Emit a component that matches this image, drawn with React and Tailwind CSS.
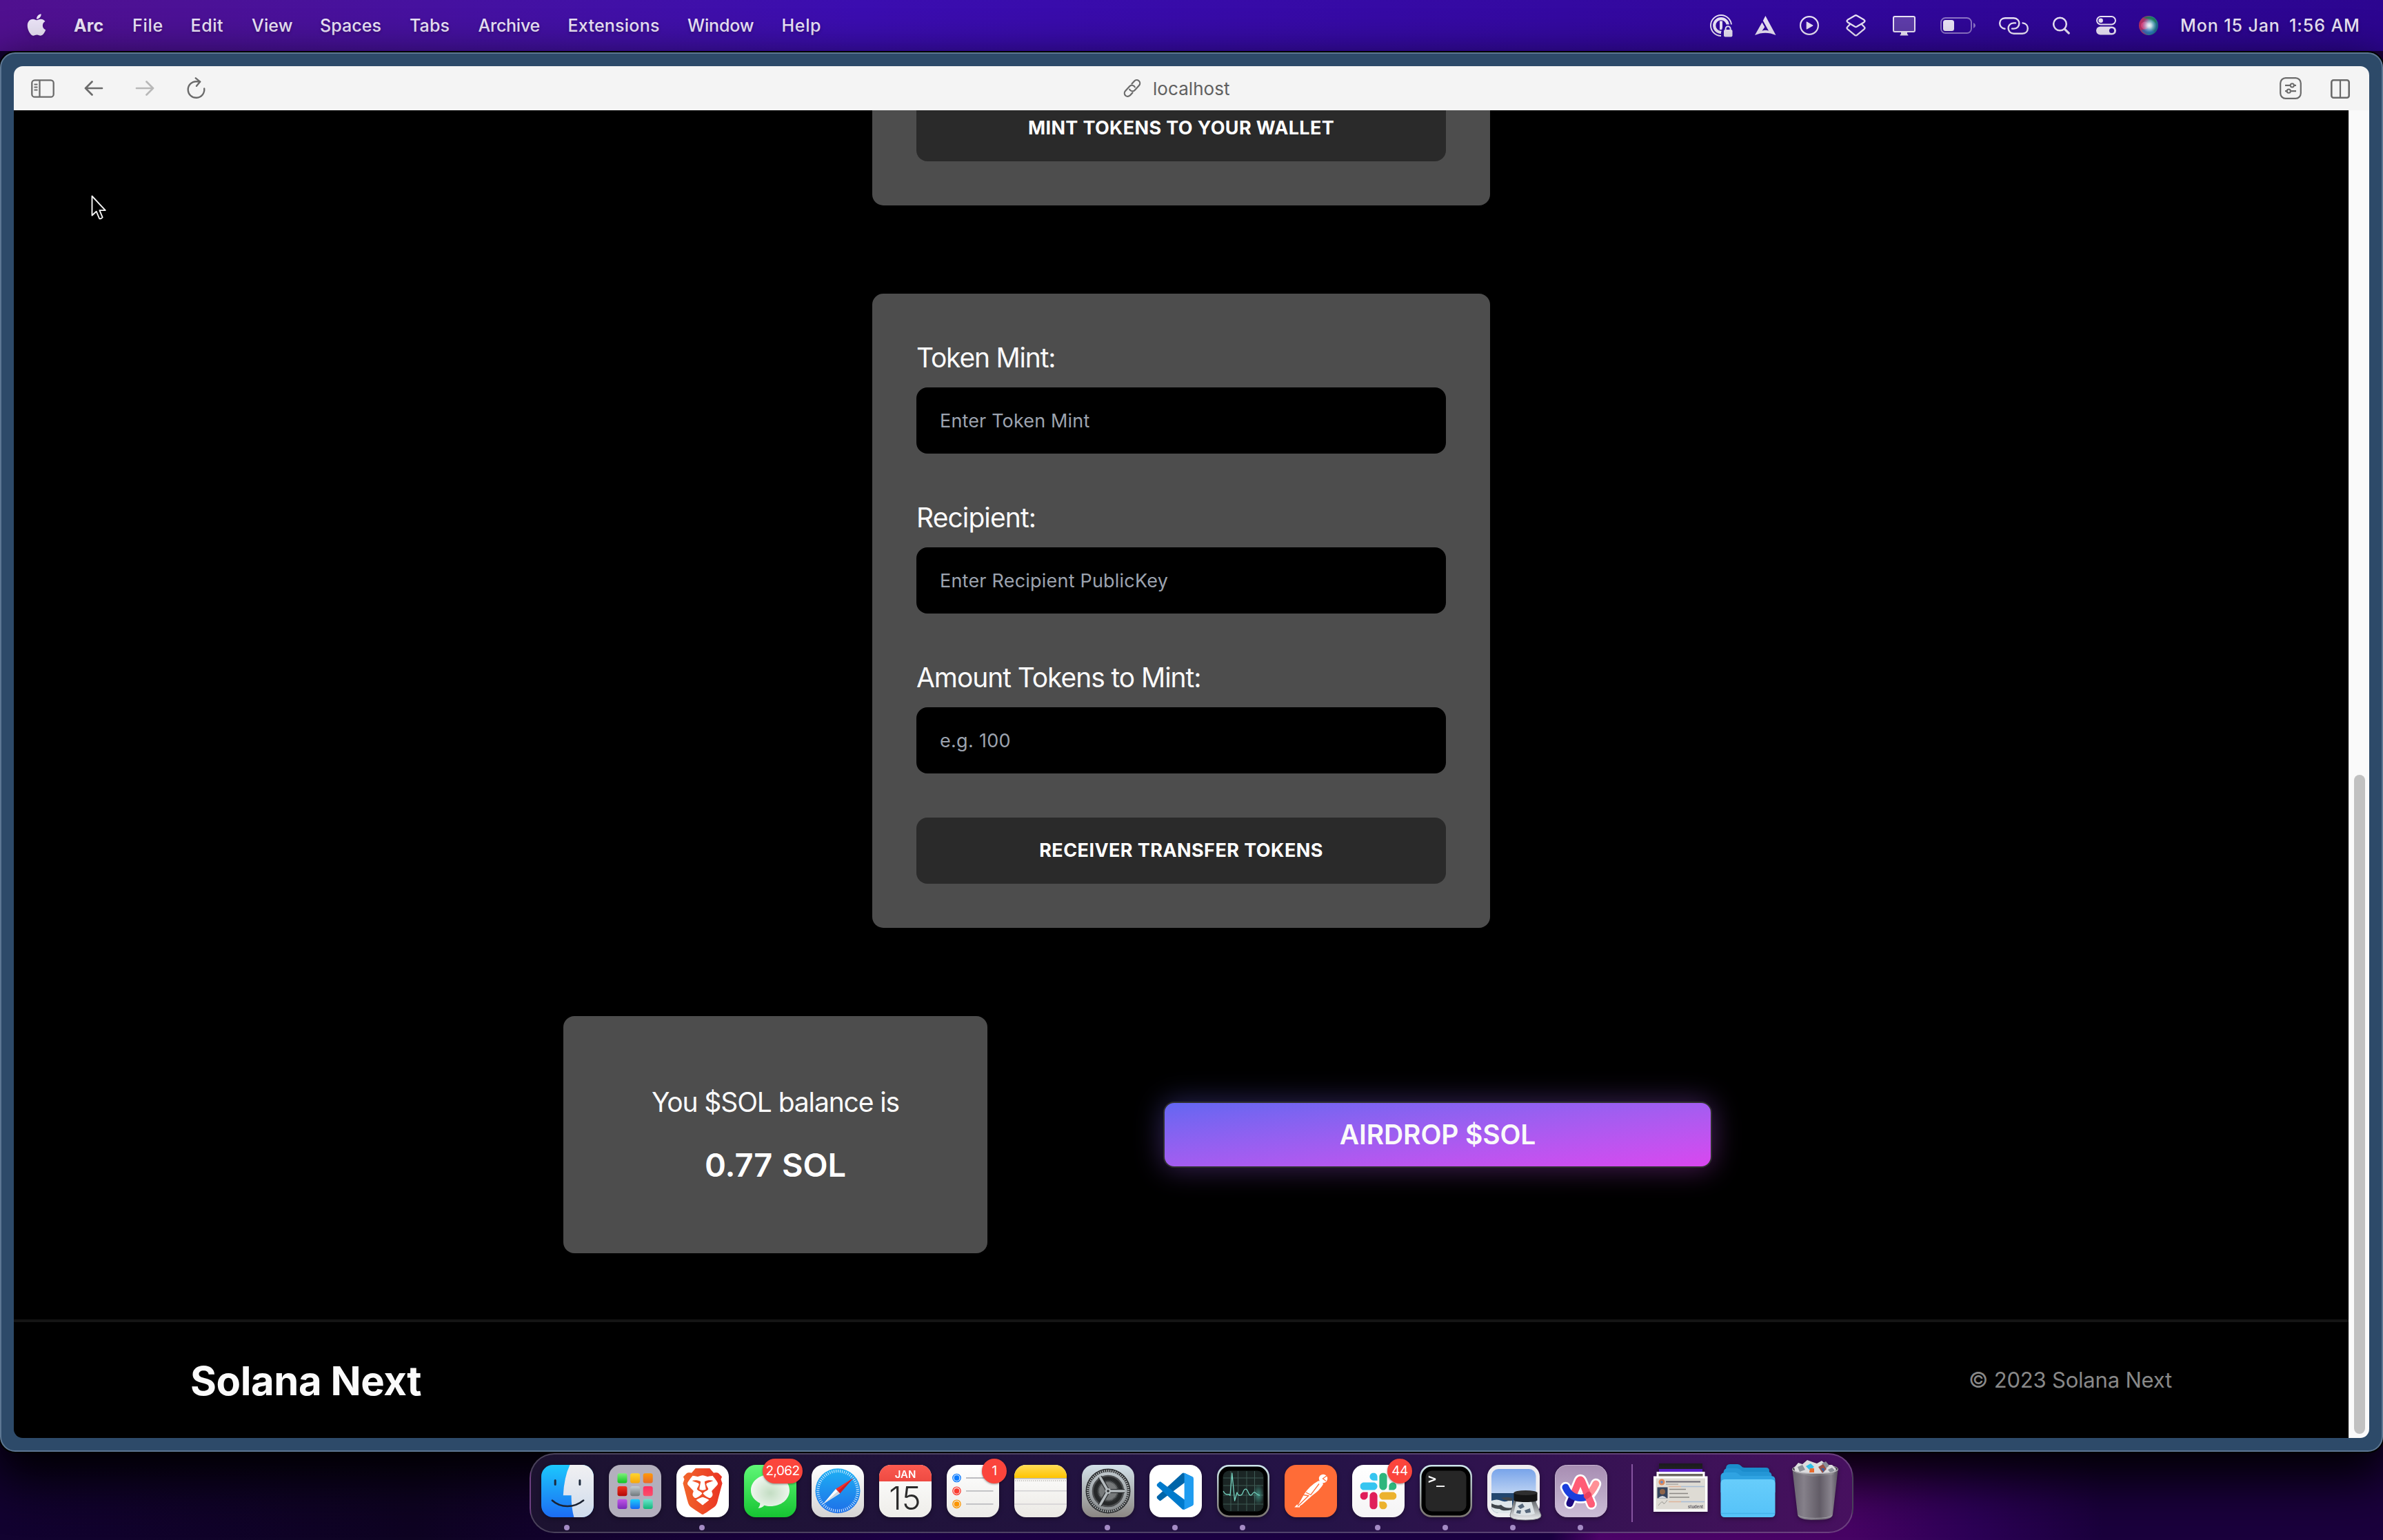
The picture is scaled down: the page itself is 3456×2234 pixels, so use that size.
import { FaApple } from "react-icons/fa";
import { SiBrave } from "react-icons/si";

const INK = "#ebe4f7";

/* ---------------------------------------------------------------- menu bar */

const MENU = [
  { label: "Arc", cls: "w-[85px] font-bold tracking-[0.17px]" },
  { label: "File", cls: "w-[84.6px] tracking-[0.75px]" },
  { label: "Edit", cls: "w-[88.4px] tracking-[0.53px]" },
  { label: "View", cls: "w-[99px] tracking-[0.18px]" },
  { label: "Spaces", cls: "w-[130px] tracking-[0.08px]" },
  { label: "Tabs", cls: "w-[99.5px] tracking-[0.13px]" },
  { label: "Archive", cls: "w-[130px] tracking-[-0.25px]" },
  { label: "Extensions", cls: "w-[173.500px] tracking-[0.24px]" },
  { label: "Window", cls: "w-[136.500px] tracking-[-0.14px]" },
  { label: "Help", cls: "w-[80px] tracking-[0.67px]" },
];

function StatusIcons() {
  return (
    <>
      <svg width="33" height="33" viewBox="0 0 33 33" fill="none">
        <circle cx="16" cy="16" r="15" stroke={INK} strokeWidth="1.9" />
        <circle cx="16" cy="16" r="9.8" stroke={INK} strokeWidth="4.2" />
        <rect x="14" y="9.5" width="4" height="12.5" fill={INK} />
        <path d="M16 33V26l2.5-8.5L22 14.5h11V33z" fill="#2f08a0" />
        <rect x="20" y="22" width="12.5" height="10.5" rx="2" fill={INK} />
        <path d="M22.6 23v-2.200a3.500 3.500 0 0 1 7 0V23" stroke={INK} strokeWidth="2" />
      </svg>
      <svg className="ml-[32px]" width="31" height="28" viewBox="0 0 31 28" fill={INK}>
        <path d="M0 28 10.500 9.500l3.800 6.800-3.800 5.500c3.500-1.300 6.500-1.300 9.500 0L11.800 7l3.600-7L30.500 28C20.500 23.500 10 23.500 0 28z" />
      </svg>
      <svg className="ml-[34px]" width="28" height="28" viewBox="0 0 28 28" fill="none">
        <circle cx="14" cy="14" r="12.900" stroke={INK} strokeWidth="2.200" />
        <path d="M10.200 8.800v10.400l9-5.200z" fill={INK} stroke={INK} strokeLinejoin="round" />
      </svg>
      <svg className="ml-[39px]" width="29" height="32" viewBox="0 0 29 32" fill="none" stroke={INK} strokeWidth="2.300" strokeLinejoin="round" strokeLinecap="round">
        <path d="M12.900 1.700q1.600-.900 3.200 0l10.300 6.100q2.200 1.700 0 3.400l-10.300 6.400q-1.600 .900-3.200 0L2.600 11.200q-2.200-1.700 0-3.400z" />
        <path d="M6.300 14 2.600 17.800q-2.200 1.700 0 3.600l10.300 8.500q1.600 .900 3.200 0l10.300-8.500q2.200-1.900 0-3.600L22.700 14" />
      </svg>
      <svg className="ml-[39px]" width="33" height="29" viewBox="0 0 33 29" fill="none">
        <rect x="1" y="1" width="31" height="22" rx="2" fill="#5f3dab" stroke={INK} strokeWidth="2" />
        <path d="M12 24h9v2.500q1.500 0 1.500 2h-12q0-2 1.500-2z" fill={INK} />
      </svg>
      <svg className="ml-[36px]" width="51" height="24" viewBox="0 0 51 24" fill="none">
        <rect x="1" y="1" width="44" height="22" rx="6.500" stroke={INK} strokeOpacity=".5" strokeWidth="1.900" />
        <rect x="4" y="4" width="16" height="16" rx="3.500" fill={INK} />
        <path d="M48 8q3 1.500 3 4t-3 4z" fill={INK} fillOpacity=".5" />
      </svg>
      <svg className="ml-[34px]" width="43" height="25" viewBox="0 0 43 25" fill="none" stroke={INK} strokeWidth="2.400" strokeLinecap="round">
        <path d="M8.500 16.800C-1.400 15.500-1.200 1.300 9 1.300h12.500c10.500 0 10.500 15.300 0 15.300H19" />
        <path d="M34.500 8.400c9.900 1.300 9.700 15.300-.500 15.300H21.500c-10.500 0-10.500-15.300 0-15.300H24" />
      </svg>
      <svg className="ml-[35px]" width="25" height="26" viewBox="0 0 25 26" fill="none" stroke={INK} strokeLinecap="round">
        <circle cx="10.500" cy="11" r="9.300" strokeWidth="2.500" />
        <path d="m17.500 18.300 5.800 5.800" strokeWidth="3.200" />
      </svg>
      <svg className="ml-[38px]" width="29" height="28" viewBox="0 0 29 28" fill="none">
        <rect x="1" y="1" width="27" height="11.500" rx="5.750" stroke={INK} strokeWidth="2" />
        <circle cx="6.700" cy="6.800" r="3.300" fill={INK} />
        <rect x="0" y="15.500" width="29" height="12" rx="6" fill={INK} />
        <circle cx="22.500" cy="21.500" r="3.600" fill="#2e0799" />
      </svg>
      <svg className="ml-[33px]" width="28" height="28" viewBox="0 0 28 28">
        <defs>
          <linearGradient id="siriBase" x1="0" y1=".4" x2="1" y2=".6">
            <stop offset="0" stopColor="#c02a5c" />
            <stop offset=".35" stopColor="#9a3f78" />
            <stop offset=".6" stopColor="#2d8f8a" />
            <stop offset="1" stopColor="#1b5f8c" />
          </linearGradient>
          <radialGradient id="siriGlow" cx=".54" cy=".5" r=".38">
            <stop offset="0" stopColor="#fff" />
            <stop offset=".3" stopColor="#e6f4ff" stopOpacity=".85" />
            <stop offset="1" stopColor="#8fd0ff" stopOpacity="0" />
          </radialGradient>
        </defs>
        <circle cx="14" cy="14" r="14" fill="url(#siriBase)" />
        <path d="M6 3q9-5 17 1 3 4 2 7-8-7-19-8z" fill="#1f7a57" fillOpacity=".85" />
        <path d="M3 21q8-2 12-6 2 6 8 8-10 9-20-2z" fill="#2a6fc0" fillOpacity=".75" />
        <circle cx="8.500" cy="14" r="5.500" fill="#f0508a" fillOpacity=".7" />
        <circle cx="14" cy="14" r="14" fill="url(#siriGlow)" />
      </svg>
    </>
  );
}

function MenuBar() {
  return (
    <header className="flex h-[74px] items-center bg-linear-to-r from-[#50108f] via-[#3b0db0] via-36% to-[#2c0590] text-[25px] font-medium text-[#ebe4f7] [text-shadow:0_2px_4px_rgba(0,0,0,0.25)]">
      <FaApple className="-mt-[3px] ml-[36px] h-[36px] w-[34px] drop-shadow-md" />
      <nav className="ml-[37px] flex leading-[74px] whitespace-nowrap">
        {MENU.map((m) => (
          <span key={m.label} className={m.cls}>
            {m.label}
          </span>
        ))}
      </nav>
      <div className="ml-auto flex w-[976px] items-center leading-[74px] whitespace-nowrap">
        <StatusIcons />
        <span className="ml-[32px] w-[158px] tracking-[0.900px]">Mon 15 Jan</span>
        <span className="tracking-[0.920px]">1:56 AM</span>
      </div>
    </header>
  );
}

/* ----------------------------------------------------------- browser chrome */

function Toolbar() {
  return (
    <div className="flex h-[64px] shrink-0 items-center bg-[#f4f4f4] text-[#6b6b6b]">
      <div className="flex w-[1608px] items-center pl-[25px]">
        <svg width="34" height="27" viewBox="0 0 34 27" fill="none" stroke="currentColor">
          <rect x="1.300" y="1.300" width="31.400" height="24.400" rx="4" strokeWidth="2.300" />
          <path d="M12.500 2v23" strokeWidth="2.300" />
          <path d="M4.500 7.500h5M4.500 11.500h5M4.500 15.500h5" strokeWidth="1.800" />
        </svg>
        <svg className="ml-[43px]" width="28" height="22" viewBox="0 0 28 22" fill="none" stroke="currentColor" strokeWidth="2.700" strokeLinecap="round" strokeLinejoin="round">
          <path d="M26 11H2M11.500 1.500 2 11l9.500 9.500" />
        </svg>
        <svg className="ml-[46px] text-[#b8b8b8]" width="28" height="22" viewBox="0 0 28 22" fill="none" stroke="currentColor" strokeWidth="2.700" strokeLinecap="round" strokeLinejoin="round">
          <path d="M2 11h24M16.500 1.500 26 11l-9.500 9.500" />
        </svg>
        <svg className="ml-[47px]" width="28" height="32" viewBox="0 0 28 32" fill="none" stroke="currentColor" strokeWidth="2.400" strokeLinecap="round" strokeLinejoin="round">
          <path d="M25.200 16.500a11.800 11.800 0 1 1-11.500-10.300c2 0 3.600.100 5.300.300" />
          <path d="m12.800 1.300 6.400 5.300-5.200 6.200" />
        </svg>
      </div>
      <svg width="28" height="28" viewBox="0 0 28 28" fill="none" stroke="currentColor" strokeWidth="2.200" strokeLinecap="round">
        <g transform="rotate(-48 14 14)">
          <path d="M9.500 18.700H4.300a4.700 4.700 0 0 1 0-9.400h9.200a4.700 4.700 0 0 1 4.300 6.500" />
          <path d="M18.500 9.300h5.200a4.700 4.700 0 0 1 0 9.400h-9.200a4.700 4.700 0 0 1-4.300-6.500" />
        </g>
      </svg>
      <span className="ml-[16px] pt-px text-[26px] leading-[64px] tracking-[0.050px] text-[#606060]">localhost</span>
      <div className="ml-auto flex items-center pr-[28px]">
        <svg width="32" height="32" viewBox="0 0 32 32" fill="none" stroke="currentColor">
          <rect x="1.200" y="1.200" width="29.600" height="29.600" rx="7.500" strokeWidth="2.200" />
          <path d="M8 11.800h7.500M21 11.800h3M8 20.200h2.500M16.500 20.200H24" strokeWidth="2.300" />
          <circle cx="18.300" cy="11.800" r="2.600" strokeWidth="2" />
          <circle cx="13.300" cy="20.200" r="2.600" strokeWidth="2" />
        </svg>
        <svg className="mt-[2px] ml-[42px]" width="28" height="28" viewBox="0 0 28 28" fill="none" stroke="currentColor" strokeWidth="2.600">
          <rect x="1.300" y="1.300" width="25.400" height="25.400" rx="3" />
          <path d="M14 1.500v25" strokeWidth="2.200" />
        </svg>
      </div>
    </div>
  );
}

/* -------------------------------------------------------------- page itself */

function Field({ label, labelClass, placeholder, inputClass }) {
  return (
    <label className="mb-[64px] block">
      <span className={"mb-[16px] block h-[56px] pt-px text-[39px] leading-[56px] text-[#fafafa] " + labelClass}>{label}</span>
      <span className={"flex h-[96px] items-center rounded-[16px] border-2 border-black bg-black px-[32px] pt-[2px] text-[27px] text-[#9ca3af] " + inputClass}>
        {placeholder}
      </span>
    </label>
  );
}

function ActionButton({ className, children }) {
  return (
    <button className={"block h-[96px] w-full rounded-[16px] bg-[#2a2a2a] text-[27px] font-bold text-white " + className}>
      {children}
    </button>
  );
}

function Page() {
  return (
    <main className="flex h-full w-[3386px] flex-col items-center overflow-hidden bg-black">
      <section className="-mt-[62px] h-[200px] w-[896px] shrink-0 rounded-[16px] bg-[#4d4d4d] px-[64px] pt-[40px]">
        <ActionButton className="tracking-[0.350px]">MINT TOKENS TO YOUR WALLET</ActionButton>
      </section>

      <section className="mt-[128px] h-[920px] w-[896px] shrink-0 rounded-[16px] bg-[#4d4d4d] p-[64px]">
        <Field label="Token Mint:" labelClass="tracking-[-1.200px]" placeholder="Enter Token Mint" inputClass="tracking-[0.150px]" />
        <Field label="Recipient:" labelClass="tracking-[-0.900px]" placeholder="Enter Recipient PublicKey" inputClass="tracking-[0.210px]" />
        <Field label="Amount Tokens to Mint:" labelClass="tracking-[-1.080px]" placeholder="e.g. 100" inputClass="tracking-[0.300px]" />
        <ActionButton className="tracking-[0.430px]">RECEIVER TRANSFER TOKENS</ActionButton>
      </section>

      <div className="mt-[128px] flex w-full shrink-0 items-center gap-[255px] pl-[797px]">
        <section className="flex h-[344px] w-[615px] flex-col items-center gap-[32px] rounded-[16px] bg-[#4d4d4d] py-[96px] whitespace-nowrap">
          <p className="pt-px text-[39px] leading-[55px] tracking-[-1.120px] text-[#fafafa]">You $SOL balance is</p>
          <p className="text-[47px] leading-[64px] font-semibold tracking-[-0.100px] text-white">0.77&nbsp;<span className="ml-[2px]">SOL</span></p>
        </section>
        <div className="relative h-[96px] w-[796px]">
          <div className="absolute -inset-[2px] rounded-[20px] bg-linear-to-br from-[#6366f1] to-[#d946ef] opacity-35 blur-[20px]" />
          <button className="relative block h-full w-full rounded-[16px] border-2 border-[#2e2e2e] bg-linear-to-br from-[#6366f1] to-[#d946ef] pt-px text-[39px] font-semibold tracking-[-0.130px] text-[#fafafa]">
            AIRDROP $SOL
          </button>
        </div>
      </div>

      <footer className="mt-[96px] flex h-[172px] w-full shrink-0 items-center justify-between border-t-4 border-[#141414] pr-[256px] pl-[256px]">
        <h2 className="pt-[2px] text-[58px] font-bold tracking-[-0.430px] text-[#fafafa]">Solana Next</h2>
        <p className="pt-px text-[31px] tracking-[-0.200px] text-[#888888]">© 2023 Solana Next</p>
      </footer>
    </main>
  );
}

function BrowserWindow() {
  return (
    <div className="relative h-[2030px] rounded-[22px] border-2 border-[#5d7793] bg-[#2d4a69] p-[18px] shadow-[0_0_0_2px_#000000,0_30px_70px_10px_rgba(0,0,0,0.950)]">
      <div className="flex h-full flex-col overflow-hidden rounded-[13px]">
        <Toolbar />
        <div className="flex min-h-0 flex-1">
          <Page />
          <div className="flex flex-1 flex-col items-center justify-end border-l border-[#e6e6e6] bg-[#fafafa] pb-[6px]">
            <div className="h-[956px] w-[16px] rounded-full bg-[#c1c1c1]" />
          </div>
        </div>
      </div>
      <svg className="absolute top-[204px] left-[129px]" width="28" height="40" viewBox="0 0 28 40" fill="#000" stroke="#f4f4f4" strokeWidth="1.900" strokeLinejoin="round">
        <path d="M2.500 2.500v28l6.200-5.800 4.400 10.300q2.600 1 4.600-1.700l-4.300-10.200h8.400z" />
      </svg>
    </div>
  );
}

/* --------------------------------------------------------------------- dock */

function Tile({ children }) {
  return (
    <svg className="block overflow-visible drop-shadow-[0_2px_3px_rgba(0,0,0,0.350)]" width="76" height="76" viewBox="0 0 76 76">
      {children}
    </svg>
  );
}

function Gradient({ id, from, to, horizontal }) {
  return (
    <linearGradient id={id} x1="0" y1="0" x2={horizontal ? "1" : "0"} y2={horizontal ? "0" : "1"}>
      <stop offset="0" stopColor={from} />
      <stop offset="1" stopColor={to} />
    </linearGradient>
  );
}

function Finder() {
  return (
    <Tile>
      <defs>
        <Gradient id="finBlue" from="#1cc8fd" to="#1c6cf2" />
        <Gradient id="finGrey" from="#f1f0f2" to="#cfdcec" />
        <clipPath id="finClip"><rect width="76" height="76" rx="17" /></clipPath>
      </defs>
      <g clipPath="url(#finClip)">
        <rect width="76" height="76" fill="url(#finBlue)" />
        <path d="M41.500 0Q33 18 31.800 44.300h11.800Q43.500 62 47.400 76H76V0z" fill="url(#finGrey)" />
      </g>
      <path d="M20.200 22.500v6M55.900 22.500v6" stroke="#1d2a3d" strokeWidth="3" strokeLinecap="round" />
      <path d="M15.800 51.500Q25 60 38 60t23.200-8.500" fill="none" stroke="#1a2231" strokeWidth="2.500" strokeLinecap="round" />
    </Tile>
  );
}

const PADS = [
  ["#7df07a", "#0fc423"], ["#ffd52e", "#f7a60a"], ["#ff9a0b", "#e8692a"],
  ["#f2331f", "#b3090a"], ["#c3cdd4", "#70787c"], ["#ff2d62", "#f9506a"],
  ["#c154e8", "#7a2bb8"], ["#1fd0fb", "#1668f2"], ["#6ee5cf", "#12b77a"],
];

function Launchpad() {
  return (
    <Tile>
      <defs>
        {PADS.map(([a, b], i) => (
          <Gradient key={i} id={"pad" + i} from={a} to={b} />
        ))}
      </defs>
      <rect width="76" height="76" rx="17" fill="#b3afbd" />
      {PADS.map((p, i) => (
        <rect key={i} x={12.500 + (i % 3) * 18.600} y={12.300 + Math.floor(i / 3) * 18.700} width="14" height="14.200" rx="3" fill={"url(#pad" + i + ")"} />
      ))}
    </Tile>
  );
}

function Brave() {
  return (
    <Tile>
      <defs><Gradient id="braveG" from="#f1652b" to="#ea3323" horizontal /></defs>
      <rect width="76" height="76" rx="17" fill="#fff" />
      <SiBrave x="4.500" y="5" size="67" style={{ fill: "url(#braveG)" }} />
    </Tile>
  );
}

function Messages() {
  return (
    <Tile>
      <defs>
        <Gradient id="msgBg" from="#5ff777" to="#16c432" />
        <radialGradient id="msgBubble" cx=".5" cy=".55" r=".55">
          <stop offset="0" stopColor="#c3ddc3" />
          <stop offset="1" stopColor="#f2f8f2" />
        </radialGradient>
      </defs>
      <rect width="76" height="76" rx="17" fill="url(#msgBg)" />
      <path d="M38 14c16 0 28 10 28 23S54 60 38 60c-3 0-6-.400-8.500-1.200-2.500 2.400-5.500 4-9 4 2-2 3-4.500 2.700-7.200C15 51.500 10 45 10 37c0-13 12-23 28-23z" fill="url(#msgBubble)" />
    </Tile>
  );
}

function Safari() {
  return (
    <Tile>
      <defs>
        <Gradient id="safBg" from="#ffffff" to="#d4d3d3" />
        <Gradient id="safDisc" from="#1eb0f4" to="#1e6fe8" />
      </defs>
      <rect width="76" height="76" rx="17" fill="url(#safBg)" />
      <circle cx="38" cy="37.800" r="32.500" fill="url(#safDisc)" />
      <circle cx="38" cy="37.800" r="28.800" fill="none" stroke="#e8f4ff" strokeOpacity=".85" strokeWidth="4.200" strokeDasharray="1.100 1.913" />
      <path d="M60.500 19 41 41.500 35 35z" fill="#f0302c" />
      <path d="M60.500 19 41 41.500 38 38.200z" fill="#c81f28" />
      <path d="M16.500 57 35 35l6 6.500z" fill="#fff" />
      <path d="M16.500 57 38 38.200l3 3.300z" fill="#cfd6de" />
    </Tile>
  );
}

function Calendar() {
  return (
    <Tile>
      <defs>
        <Gradient id="calBg" from="#ffffff" to="#eeede9" />
        <Gradient id="calTop" from="#fb5a50" to="#ee4a42" />
        <clipPath id="calClip"><rect width="76" height="76" rx="17" /></clipPath>
      </defs>
      <g clipPath="url(#calClip)">
        <rect width="76" height="76" fill="url(#calBg)" />
        <rect width="76" height="24" fill="url(#calTop)" />
      </g>
      <text x="38" y="18.500" textAnchor="middle" fill="#fff" fontFamily="Inter, sans-serif" fontSize="15" fontWeight="600">JAN</text>
      <text x="37.500" y="65" textAnchor="middle" fill="#2b2b2b" fontFamily="Inter, sans-serif" fontSize="47" fontWeight="300">15</text>
    </Tile>
  );
}

function Reminders() {
  return (
    <Tile>
      <defs><Gradient id="remBg" from="#ffffff" to="#ecebe8" /></defs>
      <rect width="76" height="76" rx="17" fill="url(#remBg)" />
      {[["#0a7bff", 19], ["#fb3b30", 37.800], ["#fb9500", 56.800]].map(([c, y]) => (
        <g key={c}>
          <circle cx="14.500" cy={y} r="5.700" fill="none" stroke={c} strokeWidth="1.300" />
          <circle cx="14.500" cy={y} r="3.900" fill={c} />
          <path d={"M28 " + y + "h39.500"} stroke="#bdbdc1" strokeWidth="1.800" />
        </g>
      ))}
    </Tile>
  );
}

function Notes() {
  return (
    <Tile>
      <defs>
        <Gradient id="noteBg" from="#ffffff" to="#ebe9e4" />
        <Gradient id="noteTop" from="#ffdc59" to="#ffc400" />
        <clipPath id="noteClip"><rect width="76" height="76" rx="17" /></clipPath>
      </defs>
      <g clipPath="url(#noteClip)">
        <rect width="76" height="76" fill="url(#noteBg)" />
        <rect width="76" height="19" fill="url(#noteTop)" />
        <path d="M0 19.800h76" stroke="#aaa79f" strokeWidth="1.300" />
        <path d="M1 23h75" stroke="#b9b7b2" strokeWidth="1.500" strokeDasharray="1.300 1.600" />
        <path d="M0 37.800h76M0 57h76" stroke="#d2d1d3" strokeWidth="1.600" />
      </g>
    </Tile>
  );
}

function Settings() {
  return (
    <Tile>
      <defs>
        <Gradient id="setBg" from="#d3e1e9" to="#8b8783" />
        <Gradient id="setMetal" from="#bcc4c8" to="#8d9193" />
      </defs>
      <rect width="76" height="76" rx="17" fill="url(#setBg)" />
      <circle cx="38" cy="38" r="32.500" fill="#2b2d2f" />
      <circle cx="38" cy="38" r="29.500" fill="none" stroke="#aeb3b5" strokeWidth="3" strokeDasharray="1.500 1.589" />
      <circle cx="38" cy="38" r="25.500" fill="#4d4f51" stroke="url(#setMetal)" strokeWidth="4.500" />
      <circle cx="38" cy="38" r="17" fill="none" stroke="#262829" strokeWidth="8" />
      <circle cx="38" cy="38" r="14.500" fill="#76797a" stroke="#3d4042" strokeWidth="3.500" strokeDasharray="1.200 1.077" />
      <path d="M38 38h24M38 38 26 17.200M38 38 26 58.800" stroke="#2b2d2f" strokeWidth="6" />
      <path d="M38 38h24M38 38 26 17.200M38 38 26 58.800" stroke="#b4babd" strokeWidth="3.600" />
      <circle cx="38" cy="38" r="4" fill="#b4babd" />
      <circle cx="38" cy="38" r="1.800" fill="#2b2d2f" />
    </Tile>
  );
}

function Code() {
  return (
    <Tile>
      <rect width="76" height="76" rx="17" fill="#fff" />
      <svg x="10.500" y="11.500" width="53.500" height="53.500" viewBox="0 0 100 100">
        <path fill="#0065A9" d="M96.461 10.796 75.857.876A6.230 6.230 0 0 0 68.750 2.083L1.299 63.583c-1.815 1.654-1.813 4.511.004 6.162l5.510 5.009a4.170 4.170 0 0 0 5.321.237l81.227-61.620C96.086 11.303 100 13.246 100 16.667v-.240c0-2.400-1.375-4.590-3.539-5.631z" />
        <path fill="#007ACC" d="m96.461 89.204-20.604 9.920a6.230 6.230 0 0 1-7.107-1.207l-67.451-61.500c-1.815-1.654-1.813-4.511.004-6.162l5.510-5.009a4.170 4.170 0 0 1 5.321-.237l81.227 61.620C96.086 88.697 100 86.754 100 83.333v.240c0 2.400-1.375 4.590-3.539 5.631z" />
        <path fill="#1F9CF0" d="M75.858 99.126a6.230 6.230 0 0 1-7.108-1.210C71.056 100.223 75 98.590 75 95.328V4.672C75 1.410 71.056-.223 68.750 2.083A6.230 6.230 0 0 1 75.858.874l20.600 9.907A6.250 6.250 0 0 1 100 16.413v67.174a6.250 6.250 0 0 1-3.541 5.633z" />
      </svg>
    </Tile>
  );
}

function DarkFrame({ id, fill }) {
  return (
    <>
      <defs><Gradient id={id} from="#cfe7ee" to="#79736f" /></defs>
      <rect width="76" height="76" rx="17" fill={"url(#" + id + ")"} />
      <rect x="2.500" y="2.500" width="71" height="71" rx="15" fill="#000" />
      <rect x="8.500" y="8.500" width="59" height="59" rx="9" fill={fill} />
    </>
  );
}

function Activity() {
  return (
    <Tile>
      <defs>
        <radialGradient id="actGlow" cx=".5" cy=".5" r=".5">
          <stop offset="0" stopColor="#4fae9c" stopOpacity=".7" />
          <stop offset="1" stopColor="#4fae9c" stopOpacity="0" />
        </radialGradient>
      </defs>
      <DarkFrame id="actFrame" fill="#1b2625" />
      <path d="M20 9v58M30.500 9v58M43 9v58M54.500 9v58M9 19h58M9 30h58M9 44h58M9 57h58" stroke="#3e5a55" strokeWidth="1" />
      <ellipse cx="60" cy="43" rx="8" ry="15" fill="url(#actGlow)" />
      <path d="M9.200 38q2 5 6 5 2.500-1 3.800 1.500L21.800 12l3.800 40L29 40q1.500 5 5 4.200c4 0 3.500-9 7.500-9s3.500 9 7.500 9c2 0 3-4.500 5-4.500s4 4.500 8 4.500" fill="none" stroke="#74d3c0" strokeWidth="1.300" strokeLinejoin="round" />
    </Tile>
  );
}

function Postman() {
  return (
    <Tile>
      <rect width="76" height="76" rx="17" fill="#ff6c37" />
      <circle cx="56" cy="20" r="6.200" fill="#fff" />
      <path d="m61.500 15.500-6 4.500 4.500 3.500" fill="none" stroke="#ff6c37" strokeWidth="1.300" />
      <path d="M48.500 23.500q3-.800 4.500 1.200 2.800 1 3 3.300c-4.500 7.500-9.500 12-16 16.500L25.500 57.500 20 61l-1-1.500 8-14.500.500-1.500q9-13.500 21-20z" fill="#fff" />
      <path d="M18 57.500 14.300 61.500h8l-.800-2.500z" fill="#fff" />
      <path d="M27 43.500l8.500 1.500M31 40l7 3.500 12-16M34.500 45 19 60" fill="none" stroke="#ff6c37" strokeWidth="1.300" />
    </Tile>
  );
}

function Slack() {
  return (
    <Tile>
      <defs><Gradient id="slBg" from="#ffffff" to="#f5f4f5" /></defs>
      <rect width="76" height="76" rx="17" fill="url(#slBg)" />
      <svg x="11.500" y="11.500" width="53" height="53" viewBox="0 0 122.800 122.800">
        <path fill="#E01E5A" d="M25.800 77.600c0 7.100-5.800 12.900-12.900 12.900S0 84.700 0 77.600s5.800-12.900 12.900-12.900h12.900v12.900zm6.500 0c0-7.100 5.800-12.900 12.900-12.900s12.900 5.800 12.900 12.900v32.300c0 7.100-5.800 12.900-12.900 12.900s-12.900-5.800-12.900-12.900V77.600z" />
        <path fill="#36C5F0" d="M45.200 25.800c-7.100 0-12.900-5.800-12.900-12.900S38.100 0 45.200 0s12.900 5.800 12.900 12.900v12.900H45.200zm0 6.500c7.100 0 12.900 5.800 12.900 12.900s-5.800 12.900-12.900 12.900H12.900C5.800 58.100 0 52.300 0 45.200s5.800-12.900 12.900-12.900h32.300z" />
        <path fill="#2EB67D" d="M97 45.200c0-7.100 5.800-12.900 12.900-12.900s12.900 5.800 12.900 12.900-5.800 12.900-12.900 12.900H97V45.200zm-6.500 0c0 7.100-5.800 12.900-12.900 12.900s-12.900-5.800-12.900-12.900V12.900C64.700 5.800 70.500 0 77.600 0s12.900 5.800 12.900 12.900v32.300z" />
        <path fill="#ECB22E" d="M77.600 97c7.100 0 12.900 5.800 12.900 12.900s-5.800 12.900-12.900 12.900-12.900-5.800-12.900-12.900V97h12.900zm0-6.500c-7.100 0-12.900-5.800-12.900-12.900s5.800-12.900 12.900-12.900h32.300c7.100 0 12.900 5.800 12.900 12.900s-5.800 12.900-12.900 12.900H77.600z" />
      </svg>
    </Tile>
  );
}

function Terminal() {
  return (
    <Tile>
      <DarkFrame id="termFrame" fill="#262626" />
      <text x="12" y="27" fill="#fff" fontFamily="'DejaVu Sans Mono', monospace" fontSize="20" fontWeight="700">&gt;_</text>
    </Tile>
  );
}

function Preview() {
  return (
    <Tile>
      <defs>
        <Gradient id="pvSky" from="#78a4ea" to="#bdd3f3" />
        <Gradient id="pvGlass" from="#5e6266" to="#eef0f2" />
        <clipPath id="pvClip"><rect x="6" y="6" width="64.500" height="64" rx="10" /></clipPath>
      </defs>
      <rect width="76" height="76" rx="17" fill="#eeedf0" />
      <g clipPath="url(#pvClip)">
        <rect x="6" y="6" width="65" height="36" fill="url(#pvSky)" />
        <rect x="6" y="41" width="65" height="30" fill="#23476f" />
        <path d="M6 52q8-3 14 0t16-2v20H6z" fill="#dfe6ea" />
        <path d="M6 56q8 4 14 2 6 6 16 4v3q-14 3-18-1-7 0-12-3zM20 48q8-2 16 0v4q-9 1-16-4z" fill="#40454b" />
      </g>
      <path d="M39 51h30l9 22q1 7-22.500 7T33 73z" fill="url(#pvGlass)" stroke="#7d8185" strokeWidth="1" />
      <path d="M42 53h22l5 18q-14 5-31 0z" fill="#dde3e6" />
      <path d="m44 60 7-4 3 5-6 3zM54 66l8-3 1 6-7 1zM43 66l6 0-1 5-6-1z" fill="#56677a" />
      <path d="M38.500 40.500v10.500q0 3 17 3t17-3V40.500z" fill="#141414" />
      <ellipse cx="55.500" cy="40.500" rx="17" ry="3.500" fill="#2f2f2f" />
    </Tile>
  );
}

function Arc() {
  const loop = "M15.500 32.500C19.500 42 27.500 48 37.500 48 48 48 55 39.500 59.500 27.500";
  const letter = "M21.500 56 35 23.500q2-4 4 0L53 57";
  return (
    <Tile>
      <defs><Gradient id="arcBg" from="#a78db2" to="#cbbdd6" /></defs>
      <rect x=".5" y=".5" width="75" height="75" rx="17" fill="url(#arcBg)" stroke="#c9b6d2" />
      <g fill="none" strokeLinecap="round" strokeLinejoin="round">
        <path d={loop} stroke="#fff" strokeWidth="15.500" />
        <path d={letter} stroke="#fff" strokeWidth="15.500" />
        <path d="M47 44.500Q54 39 59.500 27.500" stroke="#ff9096" strokeWidth="10" />
        <path d="M21.500 56 27 43" stroke="#1c0a80" strokeWidth="10" />
        <path d="M27 43 35 23.500q2-4 4 0L53 57" stroke="#ff5c76" strokeWidth="10" />
        <path d="M15.500 32.500C19.500 42 27.500 48 37.500 48q3.500 0 6-1" stroke="#1b3fdc" strokeWidth="10" />
        <path d="M45 38 53 57" stroke="#ff5c76" strokeWidth="10" />
        <path d="M46 45.500 49 43" stroke="#e8405f" strokeWidth="8" />
      </g>
    </Tile>
  );
}

function Documents() {
  return (
    <Tile>
      <defs><Gradient id="docBack" from="#1b1b1d" to="#3c3c40" /></defs>
      <rect x="7" y="-2" width="63" height="40" fill="url(#docBack)" />
      <rect x="7" y="6" width="63" height="8" fill="#5d20c9" />
      <rect x="3.500" y="10" width="70" height="50" fill="#fff" />
      <rect x="6.500" y="13" width="64" height="6" fill="#6b675f" />
      <rect x="-1" y="16.500" width="78.500" height="51.500" fill="#fff" />
      <rect x="2.500" y="19.500" width="71.500" height="45" fill="#dedbd4" />
      <circle cx="11" cy="25" r="4.500" fill="#e08a5a" />
      <circle cx="11" cy="25" r="2" fill="#6a8cc0" />
      <rect x="17" y="23.500" width="50" height="2" fill="#6b6974" />
      <rect x="17" y="27.500" width="18" height="1.200" fill="#a3a09b" />
      <path d="M21 31.500h18M21 53.500h18" stroke="#e0b49a" strokeWidth="1.300" />
      <path d="M39 31.500h34M39 53.500h34" stroke="#a9bcd4" strokeWidth="1.300" />
      <rect x="4.500" y="32.500" width="15" height="16" fill="#34435c" />
      <circle cx="12" cy="39" r="4" fill="#8f6549" />
      <path d="M5.500 48.500q6.500-7 13 0z" fill="#d5d9de" />
      <path d="M22 35.500h24M22 41.500h27M22 47h29" stroke="#8b8984" strokeWidth="1.500" />
      <path d="M6 59q6-8 7-4t6-4" fill="none" stroke="#9c9a95" strokeWidth="1" />
      <text x="49" y="63" fill="#55535b" fontFamily="Inter, sans-serif" fontSize="6" fontWeight="600">student</text>
    </Tile>
  );
}

function Folders() {
  return (
    <Tile>
      <defs><Gradient id="foldFront" from="#67cdfb" to="#55c2f8" /></defs>
      <path d="M6 6q0-7 6-7h11q3 0 5 2.500t5 2.500h31q5 0 5 5v20H6z" fill="#1b8ccc" />
      <path d="M2.500 12q0-7 6-7h14q3 0 5 2.500t5 2.500h34q6 0 6 6v20h-70z" fill="#2496d6" />
      <path d="M-1.500 17.500q0-6.500 6-6.500h15q3 0 5 2.500t5 2.500h42q6 0 6 6v18h-79z" fill="#2fa3e2" />
      <path d="M-1.500 27q0-6 6-6h67q6 0 6 6v43q0 6-6 6h-67q-6 0-6-6z" fill="url(#foldFront)" />
      <path d="M-1 70.500h78" stroke="#46b2ea" strokeWidth="1.500" />
    </Tile>
  );
}

function Trash() {
  return (
    <Tile>
      <defs>
        <linearGradient id="binBody" x1="0" y1="0" x2="1" y2="0">
          <stop offset="0" stopColor="#6d6a72" />
          <stop offset=".25" stopColor="#8c8a90" />
          <stop offset=".6" stopColor="#66636a" />
          <stop offset=".85" stopColor="#908e94" />
          <stop offset="1" stopColor="#5b5960" />
        </linearGradient>
      </defs>
      <ellipse cx="37.500" cy="6" rx="33" ry="6.500" fill="#3d3a42" stroke="#a5a3aa" strokeWidth="1" />
      <path d="m7 4 6-7 6 2 7-6 8 3 6 2 7-4 7 6 8 0 6 6-4 8-30 3-25-5z" fill="#dcdcde" />
      <path d="m12 3 7-3 4 7-8 3zM47-2l6-3 5 6-6 5zM56 7l6-3 4 4-6 4z" fill="#8b8f98" />
      <path d="m24 2 7-4 5 5-6 5z" fill="#2fbfe8" />
      <path d="m30 5 6 0 0 6-7 0z" fill="#e86a2c" />
      <path d="m42 3 7-4 5 7-6 6z" fill="#9a5248" />
      <path d="m46 5 5 0-1 6z" fill="#2f63a8" />
      <path d="M4.500 7q5 5.500 33 5.500T70.500 7L63 72q-.500 8-25.500 8T12 72z" fill="url(#binBody)" fillOpacity=".93" />
      <path d="M4.500 7q5 5.500 33 5.500T70.500 7" fill="none" stroke="#b9b7bd" strokeWidth="1.200" />
      <path d="M13 73q4 4.500 24.500 4.500T62 73" fill="none" stroke="#a19fa6" strokeWidth="1" />
    </Tile>
  );
}

const APPS = [
  { id: "finder", Icon: Finder, running: true },
  { id: "launchpad", Icon: Launchpad },
  { id: "brave", Icon: Brave, running: true },
  { id: "messages", Icon: Messages, badge: "2,062", badgeClass: "-right-[9px] w-[58px]" },
  { id: "safari", Icon: Safari },
  { id: "calendar", Icon: Calendar },
  { id: "reminders", Icon: Reminders, badge: "1", badgeClass: "-right-[11px] w-[36px]" },
  { id: "notes", Icon: Notes },
  { id: "settings", Icon: Settings, running: true },
  { id: "code", Icon: Code, running: true },
  { id: "activity", Icon: Activity, running: true },
  { id: "postman", Icon: Postman },
  { id: "slack", Icon: Slack, running: true, badge: "44", badgeClass: "-right-[11px] w-[36px]" },
  { id: "terminal", Icon: Terminal, running: true },
  { id: "preview", Icon: Preview, running: true },
  { id: "arc", Icon: Arc, running: true },
];

const STACKS = [
  { id: "documents", Icon: Documents },
  { id: "folders", Icon: Folders },
  { id: "trash", Icon: Trash },
];

function DockItem({ Icon, running, badge, badgeClass }) {
  return (
    <div className="flex w-[98px] flex-col items-center gap-[11px]">
      <div className="relative">
        <Icon />
        {badge && (
          <span className={"absolute -top-[9px] flex h-[36px] items-center justify-center rounded-full bg-[#fb453c] text-[19px] tracking-[-0.600px] text-white shadow-[0_1px_3px_rgba(0,0,0,0.400)] " + badgeClass}>
            {badge}
          </span>
        )}
      </div>
      {running && <div className="-ml-[2px] size-[8px] rounded-full bg-[#a48bc4]" />}
    </div>
  );
}

function Dock() {
  return (
    <div className="relative flex h-[116px] w-[1920px] rounded-[36px] border-2 border-white/20 bg-linear-to-r from-[#1c1230] via-[#251347] via-60% to-[#47105f] px-[4px] pt-[15px]">
      {APPS.map((a) => (
        <DockItem key={a.id} {...a} />
      ))}
      <div className="flex w-[46px] justify-center">
        <div className="-mt-px ml-[3px] h-[84px] w-[2px] bg-[#85539f]" />
      </div>
      {STACKS.map((a) => (
        <DockItem key={a.id} {...a} />
      ))}
    </div>
  );
}

export default function App() {
  return (
    <div className="flex h-[2234px] w-[3456px] flex-col overflow-hidden bg-[linear-gradient(to_right,#120230_0px,#0e0322_600px,#1c0044_1300px,#1a0040_2250px,#4c0368_2320px,#470364_2680px,#2c0056_2860px,#1a003c_3050px,#1a003c_3456px)] font-[Inter,sans-serif]">
      <MenuBar />
      <div className="h-[2px] shrink-0" />
      <BrowserWindow />
      <div className="flex justify-center pt-[2px]">
        <Dock />
      </div>
    </div>
  );
}
